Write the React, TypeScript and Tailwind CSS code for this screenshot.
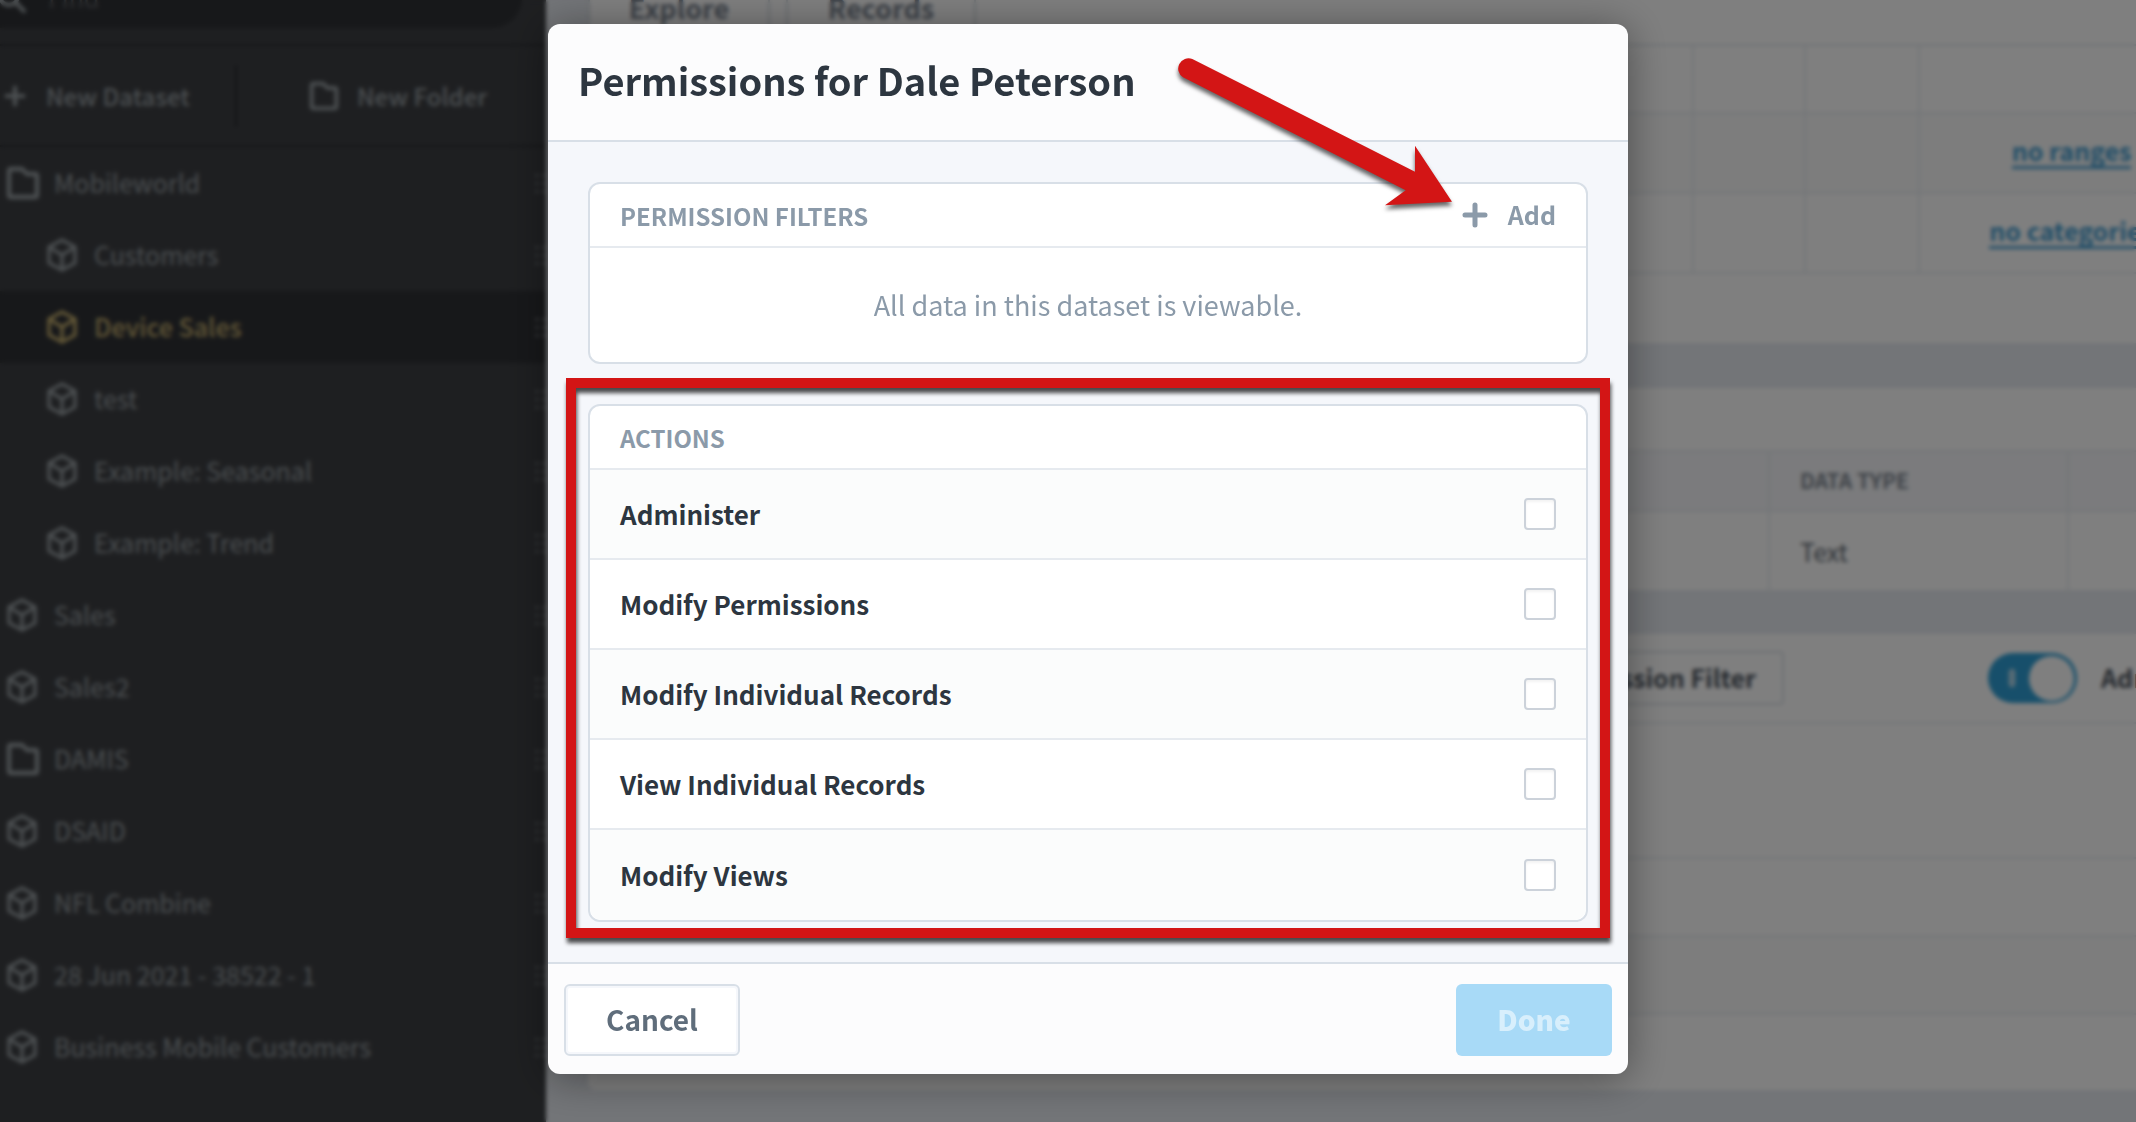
import { useState } from 'react';

const items = [
  { name: 'Mobileworld', icon: 'folder', nested: false },
  { name: 'Customers', icon: 'cube', nested: true },
  { name: 'Device Sales', icon: 'cube', nested: true },
  { name: 'test', icon: 'cube', nested: true },
  { name: 'Example: Seasonal', icon: 'cube', nested: true },
  { name: 'Example: Trend', icon: 'cube', nested: true },
  { name: 'Sales', icon: 'cube', nested: false },
  { name: 'Sales2', icon: 'cube', nested: false },
  { name: 'DAMIS', icon: 'folder', nested: false },
  { name: 'DSAID', icon: 'cube', nested: false },
  { name: 'NFL Combine', icon: 'cube', nested: false },
  { name: '28 Jun 2021 - 38522 - 1', icon: 'cube', nested: false },
  { name: 'Business Mobile Customers', icon: 'cube', nested: false },
];

const actions = [
  'Administer',
  'Modify Permissions',
  'Modify Individual Records',
  'View Individual Records',
  'Modify Views',
];

function CubeIcon() {
  return (
    <svg className="w-8 h-9 shrink-0" viewBox="0 0 32 36" fill="none" stroke="currentColor" strokeWidth="3.4" strokeLinejoin="round">
      <path d="M16 3 L29 10 V26 L16 33 L3 26 V10 Z" />
      <path d="M3 10 L16 18 L29 10 M16 18 V33" />
    </svg>
  );
}

function FolderIcon({ className }: { className: string }) {
  return (
    <svg className={className} viewBox="0 0 34 34" fill="none" stroke="currentColor" strokeWidth="4.4" strokeLinejoin="round">
      <path d="M5 3 H16 L21 8 H29 Q31 8 31 10 V29 Q31 31 29 31 H5 Q3 31 3 29 V5 Q3 3 5 3 Z" />
    </svg>
  );
}

function PlusIcon({ className }: { className: string }) {
  return (
    <svg className={className} viewBox="0 0 26 26" fill="none" stroke="currentColor" strokeWidth="5" strokeLinecap="round">
      <path d="M13 3 V23 M3 13 H23" />
    </svg>
  );
}

function DragHandle() {
  return (
    <svg className="w-6 h-6 shrink-0 text-[#65696d]" viewBox="0 0 24 24" fill="currentColor">
      {[3, 11, 19].map((y) =>
        [1, 8, 15].map((x) => <rect key={`${x}-${y}`} x={x} y={y} width="4" height="3" />)
      )}
    </svg>
  );
}

function Sidebar() {
  return (
    <aside className="w-[546px] shrink-0 overflow-hidden bg-[#3d3f43] text-[#989fa3]">
      <div className="flex h-[46px] items-start border-b-2 border-[#2c2e32] pr-6">
        <label className="-mt-8 -ml-8 flex h-[60px] flex-1 items-center gap-5 rounded-full bg-[#2f3135] pl-7">
          <svg className="w-8 h-8 shrink-0" viewBox="0 0 32 32" fill="none" stroke="currentColor" strokeWidth="4" strokeLinecap="round">
            <circle cx="13" cy="14" r="9" />
            <path d="M20 21 L28 29" />
          </svg>
          <input
            type="text"
            aria-label="Find"
            placeholder="Find"
            className="min-w-0 flex-1 bg-transparent text-[25px] outline-none placeholder:text-[#5c5f63]"
          />
        </label>
      </div>
      <div className="flex h-[101px] items-center border-b-2 border-[#2c2e32] text-[24px] font-medium">
        <button className="flex w-[235px] items-center gap-5 pl-1 text-left">
          <PlusIcon className="w-[22px] h-[22px]" />
          New Dataset
        </button>
        <div className="h-[62px] w-[2px] bg-[#25272b]" />
        <button className="flex flex-1 items-center gap-[18px] pl-[72px] text-left">
          <FolderIcon className="w-[30px] h-[30px]" />
          New Folder
        </button>
      </div>
      <ul>
        {items.map((item) => {
          const active = item.name === 'Device Sales';
          return (
            <li key={item.name}>
              <a
                href="#"
                className={`flex h-[72px] items-center text-[25px] ${item.nested ? 'pl-[46px]' : 'pl-[6px]'} ${
                  active ? 'bg-[#2f3135] text-[#c4ae6e] font-medium' : ''
                }`}
              >
                <span className="flex w-12 shrink-0">
                  {item.icon === 'folder' ? <FolderIcon className="w-[34px] h-[34px]" /> : <CubeIcon />}
                </span>
                <span className="flex-1 whitespace-nowrap">{item.name}</span>
                <span className="-mr-3">
                  <DragHandle />
                </span>
              </a>
            </li>
          );
        })}
      </ul>
    </aside>
  );
}

function Content() {
  return (
    <main className="min-w-0 flex-1 overflow-hidden bg-[#e6eaf0] pl-[42px] text-[25px]">
      <div className="-mr-[87px]">
        <section className="h-[343px] bg-white">
          <div className="flex h-[46px] gap-4 border-b-2 border-[#e2e7ed] text-[27px] font-bold text-[#78828f]">
            <button className="-mt-4 h-12 w-[182px] border-x-2 border-[#d6dde4]">Explore</button>
            <button className="-mt-4 h-12 w-[190px] border-x-2 border-[#d6dde4]">Records</button>
          </div>
          <table className="w-full table-fixed border-collapse">
            <colgroup>
              <col />
              <col className="w-[112px]" />
              <col className="w-[114px]" />
              <col className="w-[304px]" />
            </colgroup>
            <tbody>
              <tr className="h-[67px] border-b-2 border-[#e8ecf1]">
                <td />
                <td className="border-x-2 border-[#e8ecf1]" />
                <td className="border-x-2 border-[#e8ecf1]" />
                <td />
              </tr>
              <tr className="h-20 border-b-2 border-[#e8ecf1] bg-[#fafbfb]">
                <td />
                <td className="border-x-2 border-[#e8ecf1]" />
                <td className="border-x-2 border-[#e8ecf1]" />
                <td className="pb-1 text-center">
                  <a href="#" className="inline-block border-b-3 border-[#4a9fd2] leading-8 font-bold text-[#409bd0]">no ranges</a>
                </td>
              </tr>
              <tr className="h-20 border-b-2 border-[#e8ecf1]">
                <td />
                <td className="border-x-2 border-[#e8ecf1]" />
                <td className="border-x-2 border-[#e8ecf1]" />
                <td className="pb-1 text-center">
                  <a href="#" className="inline-block border-b-3 border-[#4a9fd2] leading-8 font-bold text-[#409bd0]">no categories</a>
                </td>
              </tr>
            </tbody>
          </table>
        </section>

        <section className="mt-[45px] h-[202px] bg-white pt-[62px]">
          <table className="w-full table-fixed border-collapse text-left">
            <colgroup>
              <col />
              <col className="w-[299px]" />
              <col className="w-[155px]" />
            </colgroup>
            <thead>
              <tr className="h-[60px] border-y-2 border-[#e8ecf1] bg-[#f6f7fa] text-[21px] text-[#7f8892]">
                <th />
                <th className="border-x-2 border-[#e8ecf1] pl-[30px] font-bold">DATA TYPE</th>
                <th />
              </tr>
            </thead>
            <tbody>
              <tr className="h-20">
                <td />
                <td className="border-x-2 border-[#e8ecf1] pl-[30px] text-[#5a636d]">Text</td>
                <td />
              </tr>
            </tbody>
          </table>
        </section>

        <section className="mt-11 rounded-lg bg-white">
          <div className="flex h-[90px] items-center border-b-2 border-[#e8ecf1] text-[25px] font-bold text-[#4a525c]">
            <div className="flex-1" />
            <button className="h-[54px] rounded border-2 border-[#dce2e8] px-[26px]">Add Permission Filter</button>
            <label className="ml-[204px] flex w-[235px] items-center gap-6">
              <input type="checkbox" role="switch" defaultChecked className="peer sr-only" />
              <span className="flex h-[50px] w-[89px] shrink-0 items-center justify-between rounded-full bg-[#2f9fd6] pl-[21px] pr-[3px]">
                <span className="h-[18px] w-[6px] rounded-sm border border-white bg-[#9fcfe8]" />
                <span className="h-[45px] w-[45px] rounded-full bg-white" />
              </span>
              Administer
            </label>
          </div>
          <div className="h-[135px] border-b-2 border-[#e8ecf1]" />
          <div className="h-[78px] border-b-2 border-[#e8ecf1]" />
          <div className="h-[78px] border-b-2 border-[#e8ecf1] bg-[#fafbfb]" />
          <div className="h-[75px]" />
        </section>
      </div>
    </main>
  );
}

function PermissionsModal() {
  const [checked, setChecked] = useState<string[]>([]);

  const toggle = (action: string) => {
    setChecked(checked.includes(action) ? checked.filter((a) => a !== action) : [...checked, action]);
  };

  return (
    <div
      role="dialog"
      aria-labelledby="modal-title"
      className="relative w-[1080px] max-w-full rounded-xl bg-[#fcfcfd] shadow-[0_4px_40px_rgba(0,0,0,0.4)]"
    >
      <header className="flex h-[118px] items-center border-b-2 border-[#d8dfe7] px-[30px] pb-[6px]">
        <h1 id="modal-title" className="text-[38px] font-bold text-[#2d3640]">Permissions for Dale Peterson</h1>
      </header>

      <div className="flex flex-col gap-10 bg-[#f5f7fb] p-10">
        <section className="rounded-xl border-2 border-[#d8dfe7] bg-white">
          <div className="flex h-16 items-center justify-between border-b-2 border-[#e6eaef] px-[30px] text-[#8b9aa9]">
            <h2 className="pt-[2px] text-[24px] font-bold">PERMISSION FILTERS</h2>
            <button className="flex items-center gap-5 text-[25px] font-bold">
              <PlusIcon className="w-[26px] h-[26px]" />
              Add
            </button>
          </div>
          <p className="py-9 text-center text-[27px] leading-[42px] text-[#8b9aa9]">All data in this dataset is viewable.</p>
        </section>

        <section className="relative rounded-xl border-2 border-[#d8dfe7] bg-white">
          <h2 className="flex h-[62px] items-center px-[30px] pt-[2px] text-[24px] font-bold text-[#8b9aa9]">ACTIONS</h2>
          {actions.map((action) => (
            <label
              key={action}
              className="flex h-[90px] items-center justify-between border-t-2 border-[#e6eaef] px-[30px] text-[26px] font-bold text-[#2d3640] odd:bg-white even:bg-[#fbfcfc] last-of-type:h-[92px] last-of-type:rounded-b-xl"
            >
              <span className="pb-[2px]">{action}</span>
              <input
                type="checkbox"
                checked={checked.includes(action)}
                onChange={() => toggle(action)}
                className="h-8 w-8 appearance-none rounded border-2 border-[#ccd2da] bg-white shadow-[inset_0_2px_3px_rgba(0,0,0,0.05)] checked:bg-[#2f9fd6]"
              />
            </label>
          ))}
          {/* highlight frame */}
          <div className="pointer-events-none absolute -top-7 -right-6 -bottom-[18px] -left-6 border-10 border-[#d31515] drop-shadow-[1px_5px_2px_rgba(0,0,0,0.7)]" />
        </section>
      </div>

      <footer className="flex items-start justify-between border-t-2 border-[#d8dfe7] px-4 pt-5 pb-[18px] text-[28px] font-bold">
        <button className="h-[72px] w-44 rounded-md border-2 border-[#d8dfe7] bg-white pb-[2px] text-[#5f6d7b] shadow-[inset_0_0_0_2px_#f5f7fb]">
          Cancel
        </button>
        <button disabled className="h-[72px] w-[156px] rounded-md bg-[#a8daf7] pb-[2px] font-black text-[#d8effc]">
          Done
        </button>
      </footer>

      <svg
        className="pointer-events-none absolute top-[29px] right-[172px] h-[160px] w-[283px] overflow-visible drop-shadow-[0_4px_2px_rgba(0,0,0,0.6)]"
        viewBox="99 159 849 480"
        fill="#d31515"
      >
        <path d="M157 177 L825 515 V437 L936 605 L735 616 L797 571 L129 232 A31 31 0 0 1 157 177 Z" />
      </svg>
    </div>
  );
}

export default function App() {
  return (
    <div className="relative h-screen overflow-hidden font-['Noto_Sans_CJK_SC','Noto_Sans',sans-serif]">
      <div className="flex h-full">
        <Sidebar />
        <Content />
      </div>
      <div className="absolute inset-0 flex items-start justify-center overflow-hidden bg-black/50 pt-6 pl-10 backdrop-blur-[2px]">
        <PermissionsModal />
      </div>
    </div>
  );
}
